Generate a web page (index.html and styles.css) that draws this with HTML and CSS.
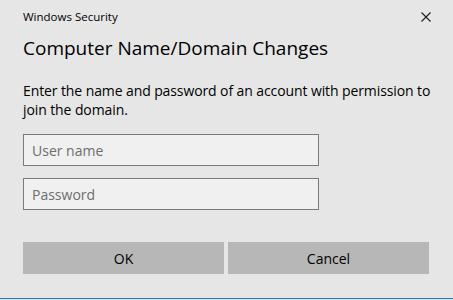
FILE: index.html
```html
<!DOCTYPE html>
<html lang="en">
<head>
    <meta charset="UTF-8">
    <title>Windows Security</title>
    <link rel="stylesheet" href="styles.css">
</head>
<body>

    <div class="dialog">
        <div class="titlebar">
            <span class="app-name">Windows Security</span>
            <button class="close" aria-label="Close">
                <svg width="10" height="10" viewBox="0 0 10 10">
                    <path d="M0.5 0.5 L9.5 9.5 M9.5 0.5 L0.5 9.5" stroke="#1a1a1a" stroke-width="1.1" fill="none"/>
                </svg>
            </button>
        </div>

        <h1 class="heading">Computer Name/Domain Changes</h1>

        <p class="message">Enter the name and password of an account with permission to join the domain.</p>

        <div class="fields">
            <input class="field" type="text" placeholder="User name">
            <input class="field" type="password" placeholder="Password">
        </div>

        <div class="actions">
            <button class="button">OK</button>
            <button class="button">Cancel</button>
        </div>
    </div>

</body>
</html>
```

FILE: styles.css
```css
* {
    box-sizing: border-box;
}

body {
    margin: 0;
    height: 300px;
    background-color: #e6e6e6;
    font-family: "Open Sans", "Noto Sans", sans-serif;
    color: #000;
    overflow: hidden;
}

.dialog {
    height: 299px;
    padding: 0 24px 0 23px;
    border-bottom: 1px solid #1e78d2;
}

.titlebar {
    display: flex;
    justify-content: space-between;
    align-items: center;
    height: 31px;
}

.app-name {
    font-size: 11.5px;
    padding-top: 2px;
}

.close {
    width: 30px;
    height: 30px;
    margin-right: -12px;
    margin-top: 2px;
    border: none;
    background: none;
    padding: 0;
    display: flex;
    justify-content: center;
    align-items: center;
}

.heading {
    margin: 3px 0 0;
    font-size: 19px;
    font-weight: normal;
    line-height: 28px;
}

.message {
    margin: 19px 0 0;
    width: 420px;
    font-size: 14px;
    letter-spacing: -0.1px;
    line-height: 19px;
}

.fields {
    display: flex;
    flex-direction: column;
    gap: 12px;
    margin-top: 15px;
}

.field {
    width: 296px;
    height: 32px;
    margin: 0;
    padding: 0 8px;
    border: 1px solid #7a7a7a;
    background-color: #f0f0f0;
    font-family: inherit;
    font-size: 14px;
    color: #000;
    outline: none;
}

.field::placeholder {
    color: #6d6d6d;
}

.actions {
    display: grid;
    grid-template-columns: repeat(2, 201px);
    gap: 4px;
    margin-top: 32px;
}

.button {
    height: 32px;
    border: none;
    background-color: #b7b7b7;
    font-family: inherit;
    font-size: 14px;
    color: #000;
}
```
